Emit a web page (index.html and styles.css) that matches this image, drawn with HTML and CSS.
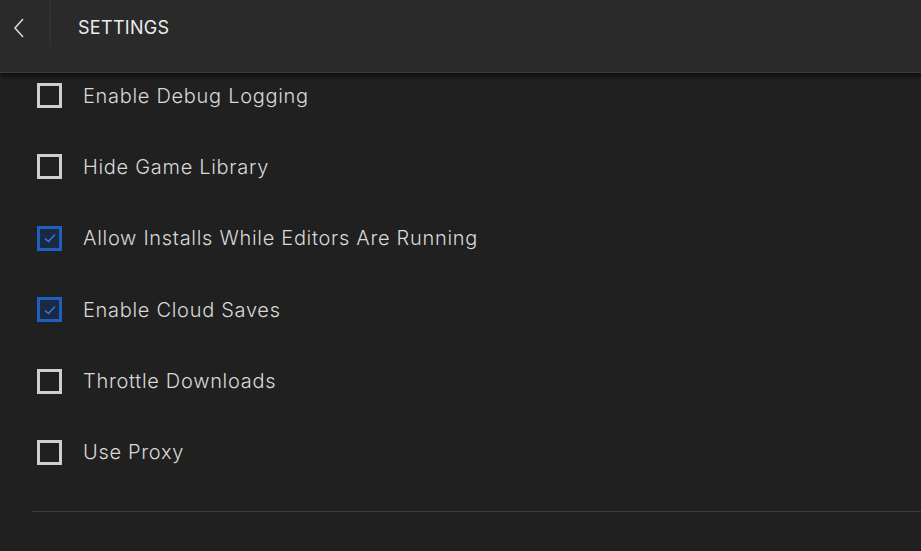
FILE: index.html
```html
<!DOCTYPE html>
<html lang="en">

<head>
    <meta charset="UTF-8">
    <meta name="viewport" content="width=device-width, initial-scale=1.0">
    <title>Settings</title>
    <link rel="stylesheet" href="styles.css">
</head>

<body>
    <header class="topbar">
        <button class="back-button" aria-label="Back">
            <svg width="12" height="22" viewBox="0 0 12 22">
                <path d="M10 2 L2 11 L10 20" fill="none" stroke="#d6d6d6" stroke-width="1.6" />
            </svg>
        </button>
        <div class="topbar-divider"></div>
        <h1 class="topbar-title">SETTINGS</h1>
    </header>

    <main class="settings">
        <label class="option">
            <span class="check"></span>
            <span class="option-label">Enable Debug Logging</span>
        </label>
        <label class="option">
            <span class="check"></span>
            <span class="option-label">Hide Game Library</span>
        </label>
        <label class="option">
            <span class="check checked">
                <svg width="14" height="12" viewBox="0 0 14 12">
                    <path d="M2 6.5 L5.5 9.5 L12 2.5" fill="none" stroke="#2f7be0" stroke-width="1.5" />
                </svg>
            </span>
            <span class="option-label">Allow Installs While Editors Are Running</span>
        </label>
        <label class="option">
            <span class="check checked">
                <svg width="14" height="12" viewBox="0 0 14 12">
                    <path d="M2 6.5 L5.5 9.5 L12 2.5" fill="none" stroke="#2f7be0" stroke-width="1.5" />
                </svg>
            </span>
            <span class="option-label">Enable Cloud Saves</span>
        </label>
        <label class="option">
            <span class="check"></span>
            <span class="option-label">Throttle Downloads</span>
        </label>
        <label class="option">
            <span class="check"></span>
            <span class="option-label">Use Proxy</span>
        </label>
        <div class="section-rule"></div>
    </main>
</body>

</html>
```

FILE: styles.css
```css
/* Launcher settings, dark */
body {
    margin: 0;
    background-color: #202020;
    color: #d8d8d8;
    font-family: 'Inter', 'Noto Sans', sans-serif;
    overflow: hidden;
}

.topbar {
    height: 72px;
    display: flex;
    align-items: flex-start;
    background-color: #2a2a2a;
    border-bottom: 1px solid #3a3a3a;
    box-shadow: 0 4px 3px rgba(0, 0, 0, 0.45);
    position: relative;
}

.back-button {
    width: 38px;
    height: 55px;
    padding: 0 0 0 13px;
    border: none;
    background: none;
    display: flex;
    align-items: center;
    cursor: pointer;
}

.topbar-divider {
    width: 2px;
    height: 55px;
    margin-left: 11px;
    background: linear-gradient(#2f2f2f, #333333 60%, #2a2a2a);
}

.topbar-title {
    margin: 0 0 0 27px;
    height: 55px;
    line-height: 55px;
    font-size: 18px;
    font-weight: 400;
    letter-spacing: 0.3px;
    color: #ececec;
}

.settings {
    padding: 10px 0 0 32px;
    display: flex;
    flex-direction: column;
    gap: 46.4px;
}

.option {
    height: 25px;
    display: flex;
    align-items: center;
    padding-left: 5px;
    cursor: pointer;
}

.check {
    width: 19px;
    height: 19px;
    border: 3px solid #cfcfcf;
    display: flex;
    align-items: center;
    justify-content: center;
    flex-shrink: 0;
}

.check.checked {
    border-color: #1f5fc0;
    background-color: #1b2a40;
}

.option-label {
    margin-left: 21px;
    font-size: 20px;
    font-weight: 300;
    letter-spacing: 0.7px;
    color: #d8d8d8;
}

.section-rule {
    margin-top: 0;
    height: 1px;
    background-color: #3a3a3a;
}
```
